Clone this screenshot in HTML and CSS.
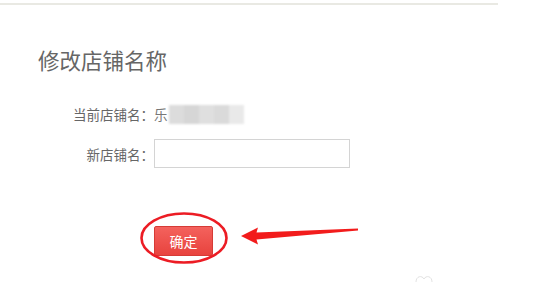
FILE: index.html
```html
<!DOCTYPE html>
<html lang="zh-CN">
<head>
<meta charset="utf-8">
<title>修改店铺名称</title>
<link rel="stylesheet" href="styles.css">
</head>
<body>
<div class="page">
  <div class="topbar"></div>
  <h1 class="title">修改店铺名称</h1>
  <div class="form">
    <div class="row row-current">
      <span class="label">当前店铺名：</span>
      <span class="value">乐<span class="mosaic"><i class="m1"></i><i class="m2"></i><i class="m3"></i><i class="m4"></i><i class="m5"></i></span></span>
    </div>
    <div class="row row-new">
      <label class="label" for="newname">新店铺名：</label>
      <input class="input" id="newname" type="text">
    </div>
    <div class="row row-btn">
      <button class="btn" type="button">确定</button>
    </div>
  </div>
  <svg class="annot" width="558" height="282" viewBox="0 0 558 282" aria-hidden="true">
    <ellipse cx="184" cy="238" rx="42.5" ry="24.5" fill="none" stroke="#ec1c24" stroke-width="2.6"/>
    <polygon points="241,236 258,227.5 256.5,232.5 358,228.5 358,230.5 256.5,239.5 258,244.5" fill="#f21c1c"/>
    <path d="M416 282 C416 276 422 275 424 279 C426 275 432 276 432 282" fill="none" stroke="#e2e2e2" stroke-width="1"/>
  </svg>
</div>
</body>
</html>
```
FILE: styles.css
```css
html, body {
  margin: 0;
  padding: 0;
  background: #ffffff;
}
body {
  font-family: "Noto Sans CJK SC", "Noto Sans", "DejaVu Sans", sans-serif;
  color: #666666;
}
.page {
  position: relative;
  width: 558px;
  height: 282px;
  overflow: hidden;
}
.topbar {
  margin-top: 3px;
  width: 498px;
  height: 2px;
  background: #e9e9e3;
}
.title {
  margin: 43px 0 0 38px;
  font-size: 21.5px;
  line-height: 24px;
  font-weight: normal;
  color: #666666;
}
.form {
  display: flex;
  flex-direction: column;
  margin-top: 32px;
  padding-left: 60px;
}
.row {
  display: flex;
  align-items: center;
}
.label {
  width: 94px;
  text-align: right;
  font-size: 13.5px;
  line-height: 20px;
  color: #666666;
}
.row-current {
  height: 20px;
}
.value {
  display: flex;
  align-items: center;
  font-size: 13.5px;
  line-height: 20px;
  color: #777777;
}
.mosaic {
  display: flex;
  margin-left: 1px;
  height: 19px;
  filter: blur(0.8px);
}
.mosaic i {
  display: block;
  width: 15px;
  height: 19px;
}
.m1 { background: #dcdcdc; }
.m2 { background: #d6d6d6; }
.m3 { background: #dfdfdf; }
.m4 { background: #dadada; }
.m5 { background: #e9e9e9; }
.row-new {
  margin-top: 15px;
}
.input {
  box-sizing: border-box;
  width: 196px;
  height: 29px;
  margin: 0;
  padding: 0 6px;
  border: 1px solid #d4d4d4;
  border-radius: 0;
  background: #ffffff;
  font-family: inherit;
  font-size: 13px;
}
.row-btn {
  margin-top: 58px;
  padding-left: 94px;
}
.btn {
  box-sizing: border-box;
  width: 59px;
  height: 30px;
  margin: 0;
  padding: 0;
  border: 1px solid #d63b36;
  border-radius: 2px;
  background: linear-gradient(#f4625d, #e8433e);
  color: #ffffff;
  font-family: inherit;
  font-size: 14px;
  line-height: 28px;
}
.annot {
  position: absolute;
  top: 0;
  left: 0;
  pointer-events: none;
}
```
